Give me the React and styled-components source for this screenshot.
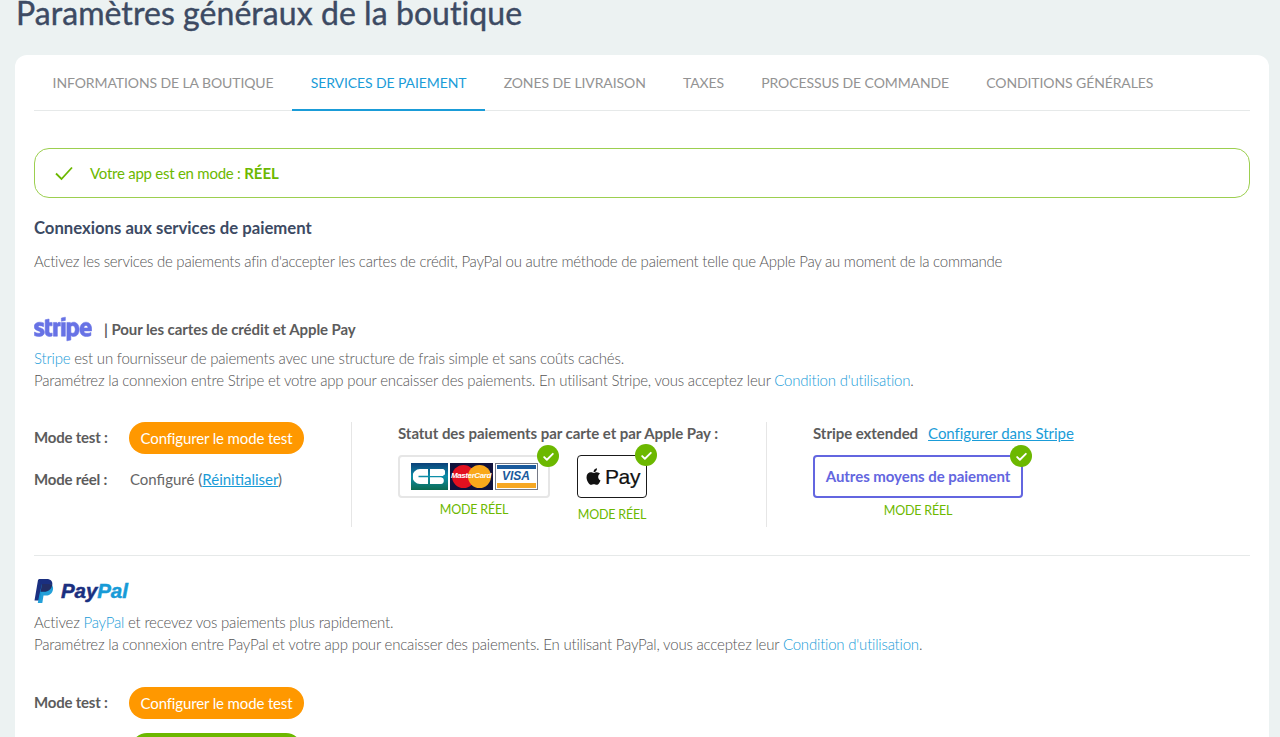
import React from 'react';
import styled, { createGlobalStyle } from 'styled-components';
import { FaStripe, FaApple } from 'react-icons/fa';

const GlobalStyle = createGlobalStyle`
  html, body {
    margin: 0;
    height: 737px;
    overflow: hidden;
    background: #ecf2f2;
    font-family: 'Lato', 'Liberation Sans', sans-serif;
  }
`;

const Page = styled.div`
  padding: 0 11px 0 15px;
`;

const Title = styled.h1`
  margin: -1px 0 28px 1px;
  font-size: 32px;
  line-height: 28px;
  font-weight: 400;
  letter-spacing: 0.06px;
  -webkit-text-stroke: 0.4px #3c4a63;
  color: #3c4a63;
`;

const Card = styled.div`
  background: #fff;
  border-radius: 12px;
  padding: 0 19px 40px;
`;

const Tabs = styled.div`
  display: flex;
  height: 55px;
  border-bottom: 1px solid #e6e9e9;
`;

const Tab = styled.div`
  padding: 1px 18.6px 0;
  display: flex;
  align-items: center;
  height: 56px;
  box-sizing: border-box;
  font-size: 14px;
  letter-spacing: -0.1px;
  white-space: nowrap;
  color: ${(p) => (p.$active ? '#1a9cd8' : '#939393')};
  border-bottom: 2px solid ${(p) => (p.$active ? '#1a9cd8' : 'transparent')};
`;

const Alert = styled.div`
  display: flex;
  align-items: center;
  gap: 17px;
  height: 50px;
  box-sizing: border-box;
  margin-top: 37px;
  padding: 0 0 1px 20px;
  border: 1px solid #9ccf4f;
  border-radius: 15px;
  color: #6cb800;
  font-size: 15px;
  letter-spacing: -0.25px;
  strong { font-weight: 700; letter-spacing: 0; }
`;

const Heading = styled.h2`
  margin: 19px 0 0;
  font-size: 16.7px;
  line-height: 22px;
  font-weight: 700;
  color: #3c4a63;
`;

const Lead = styled.p`
  margin: 11px 0 0;
  font-size: 15px;
  line-height: 22px;
  font-weight: 300;
  letter-spacing: -0.25px;
  color: #555;
`;

const ProviderHead = styled.div`
  display: flex;
  align-items: center;
  height: 30px;
  margin-top: ${(p) => p.$top || 0}px;
  gap: 12px;
  font-size: 15px;
  font-weight: 700;
  letter-spacing: -0.08px;
  color: #5c5c5c;
`;

const StripeMark = styled(FaStripe)`
  width: 58px;
  height: 46px;
  color: #6772e5;
  stroke: currentColor;
  stroke-width: 6px;
`;

const PaypalLogo = styled.div`
  display: flex;
  align-items: center;
  gap: 7px;
  font: italic 700 20.5px 'Liberation Sans', sans-serif;
  -webkit-text-stroke: 0.5px currentColor;
  color: #1a2f80;
  span { color: #179bd7; }
`;

const Body = styled.p`
  margin: ${(p) => p.$top || 0}px 0 0;
  font-size: 15px;
  line-height: 22px;
  font-weight: 300;
  letter-spacing: -0.2px;
  color: #555;
  a { color: #1a9cd8; text-decoration: none; }
`;

const Columns = styled.div`
  display: grid;
  grid-template-columns: 318px 415px 1fr;
  margin-top: ${(p) => p.$top}px;
  height: 105px;
`;

const Column = styled.div`
  padding-left: ${(p) => p.$pad || 0}px;
  border-right: ${(p) => (p.$line ? '1px solid #e6e6e6' : 'none')};
`;

const ModeRow = styled.div`
  display: grid;
  grid-template-columns: 95px 1fr;
  align-items: center;
  height: ${(p) => p.$h}px;
  margin-bottom: ${(p) => p.$gap || 0}px;
  font-size: 15px;
  color: #666;
  a { color: #1a9cd8; }
`;

const ModeLabel = styled.span`
  font-weight: 700;
  letter-spacing: -0.2px;
  color: #5c5c5c;
  margin-bottom: ${(p) => p.$lift || 0}px;
`;

const ModeValue = styled.span`
  margin-left: 1px;
`;

const Pill = styled.button`
  width: ${(p) => p.$w || 175}px;
  height: 32px;
  margin-left: ${(p) => p.$left || 0}px;
  padding: 0;
  border: 0;
  border-radius: 16px;
  background: ${(p) => p.$bg || '#ff9800'};
  color: #fff;
  font: 400 15px 'Lato', sans-serif;
  letter-spacing: -0.14px;
`;

const ColTitle = styled.div`
  display: flex;
  gap: 10px;
  height: 22px;
  line-height: 22px;
  font-size: 15px;
  font-weight: 700;
  letter-spacing: -0.05px;
  color: #5c5c5c;
  a { color: #1a9cd8; font-weight: 400; }
`;

const Logos = styled.div`
  display: flex;
  gap: 27px;
  margin-top: 11px;
`;

const Stack = styled.div`
  display: flex;
  flex-direction: column;
  align-items: center;
`;

const BadgeBox = styled.div`
  position: relative;
  box-sizing: border-box;
  display: flex;
  align-items: center;
  justify-content: center;
  height: 43px;
  width: ${(p) => p.$w}px;
  border-radius: 4px;
  border: ${(p) => p.$border};
`;

const Check = styled.span`
  position: absolute;
  top: -12px;
  right: -11px;
  width: 22px;
  height: 22px;
  border-radius: 50%;
  background: #6cb800;
  display: flex;
  align-items: center;
  justify-content: center;
`;

const ModeTag = styled.div`
  margin-top: ${(p) => p.$top}px;
  font-size: 12.5px;
  line-height: 16px;
  letter-spacing: -0.2px;
  color: #6cb800;
`;

const CardLogos = styled.div`
  display: flex;
  gap: 2px;
`;

const CbLogo = styled.div`
  width: 37px;
  height: 27px;
  background: linear-gradient(#0a3f78, #0d8ea8 50%, #0c6a50);
  display: flex;
  align-items: center;
  justify-content: center;
`;

const McLogo = styled.div`
  position: relative;
  width: 43px;
  height: 27px;
  background: #10123c;
  overflow: hidden;
  &::before, &::after {
    content: '';
    position: absolute;
    top: 2px;
    width: 23px;
    height: 23px;
    border-radius: 50%;
  }
  &::before { left: 2px; background: #e2101f; }
  &::after { right: 2px; background: #f9a81b; }
  span {
    position: absolute;
    z-index: 1;
    left: 0;
    right: 0;
    top: 8px;
    text-align: center;
    font: italic 700 8px/10px 'Liberation Sans', sans-serif;
    letter-spacing: -0.4px;
    color: #fff;
  }
`;

const VisaLogo = styled.div`
  box-sizing: border-box;
  width: 43px;
  height: 27px;
  border: 1px solid #767a86;
  background: #fff;
  display: flex;
  flex-direction: column;
  padding: 1px;
  justify-content: space-between;
  align-items: center;
  i {
    display: block;
    height: 4px;
    width: 100%;
    background: #1a5a9c;
  }
  i:last-child { background: #f7a823; height: 5px; }
  b {
    font: italic 700 12px/11px 'Liberation Sans', sans-serif;
    color: #1a5a9c;
  }
`;

const ApplePay = styled.div`
  display: flex;
  align-items: center;
  gap: 2px;
  color: #111;
  font: 400 21px 'Liberation Sans', sans-serif;
  letter-spacing: -0.4px;
  -webkit-text-stroke: 0.2px #111;
`;

const OutlineBox = styled(BadgeBox)`
  color: #6366e0;
  font-size: 15px;
  font-weight: 700;
  letter-spacing: -0.05px;
  padding-bottom: 1px;
`;

const Separator = styled.div`
  height: 1px;
  background: #e6e9e9;
  margin-top: 28px;
`;

const Tick = () => (
  <svg width="13" height="13" viewBox="0 0 24 24" fill="none" stroke="#fff" strokeWidth="3.4" strokeLinecap="round" strokeLinejoin="round">
    <path d="M4 13l5 5L20 7" />
  </svg>
);

const PaypalP = () => (
  <svg width="20" height="24" viewBox="0 0 20 24">
    <path fill="#1a2f80" d="M5 0h7.500C17 0 19 2.600 18.200 6.400 17.300 11 14 13 10 13H7.500L6 21.500H0.500L4 1z" />
    <path fill="#179bd7" d="M8 5h6c3.800 0 5.600 2.200 5 5.500-.8 4-3.600 6-7 6H9.500L8.300 24H3.800l1.500-8z" opacity=".95" />
    <path fill="#222d65" d="M8 5h6.500c1.500 0 2.800.3 3.700 1-.8 4.400-4 6.800-8.200 6.800H6.600z" />
  </svg>
);

const tabs = [
  'INFORMATIONS DE LA BOUTIQUE',
  'SERVICES DE PAIEMENT',
  'ZONES DE LIVRAISON',
  'TAXES',
  'PROCESSUS DE COMMANDE',
  'CONDITIONS GÉNÉRALES',
];

export default function App() {
  return (
    <Page>
      <GlobalStyle />
      <Title>Paramètres généraux de la boutique</Title>
      <Card>
        <Tabs>
          {tabs.map((t, i) => (
            <Tab key={t} $active={i === 1}>{t}</Tab>
          ))}
        </Tabs>

        <Alert>
          <svg width="18" height="18" viewBox="0 0 18 18" fill="none" stroke="#6cb800" strokeWidth="1.8">
            <path d="M1 9.500l5.500 5.500L17 3.500" />
          </svg>
          <span>Votre app est en mode : <strong>RÉEL</strong></span>
        </Alert>

        <Heading>Connexions aux services de paiement</Heading>
        <Lead>Activez les services de paiements afin d'accepter les cartes de crédit, PayPal ou autre méthode de paiement telle que Apple Pay au moment de la commande</Lead>

        <ProviderHead $top={42}>
          <StripeMark />
          <span>| Pour les cartes de crédit et Apple Pay</span>
        </ProviderHead>
        <Body $top={3}>
          <a href="#s">Stripe</a> est un fournisseur de paiements avec une structure de frais simple et sans coûts cachés.<br />
          Paramétrez la connexion entre Stripe et votre app pour encaisser des paiements. En utilisant Stripe, vous acceptez leur <a href="#c">Condition d'utilisation</a>.
        </Body>

        <Columns $top={31}>
          <Column $line>
            <ModeRow $h={32} $gap={9}>
              <ModeLabel $lift={3}>Mode test :</ModeLabel>
              <Pill>Configurer le mode test</Pill>
            </ModeRow>
            <ModeRow $h={32}>
              <ModeLabel>Mode réel :</ModeLabel>
              <ModeValue>Configuré (<a href="#r">Réinitialiser</a>)</ModeValue>
            </ModeRow>
          </Column>
          <Column $line $pad={46}>
            <ColTitle>Statut des paiements par carte et par Apple Pay :</ColTitle>
            <Logos>
              <Stack>
                <BadgeBox $w={152} $border="2px solid #e6e6e6">
                  <CardLogos>
                    <CbLogo>
                      <svg width="32" height="15" viewBox="0 0 32 15" fill="#fff">
                        <path d="M15 0H7a7.500 7.500 0 0 0 0 15h8V8.300H5.500V6.700H15z" />
                        <path d="M17 0h11a3.500 3.500 0 0 1 2 6.700V7H17zM17 8.300h11a3.400 3.400 0 0 1 0 6.700H17z" />
                      </svg>
                    </CbLogo>
                    <McLogo><span>MasterCard</span></McLogo>
                    <VisaLogo><i /><b>VISA</b><i /></VisaLogo>
                  </CardLogos>
                  <Check><Tick /></Check>
                </BadgeBox>
                <ModeTag $top={4}>MODE RÉEL</ModeTag>
              </Stack>
              <Stack>
                <BadgeBox $w={70} $border="1.5px solid #1a1a1a">
                  <ApplePay><FaApple size={19} />Pay</ApplePay>
                  <Check><Tick /></Check>
                </BadgeBox>
                <ModeTag $top={9}>MODE RÉEL</ModeTag>
              </Stack>
            </Logos>
          </Column>
          <Column $pad={46}>
            <ColTitle>Stripe extended <a href="#x">Configurer dans Stripe</a></ColTitle>
            <Logos>
              <Stack>
                <OutlineBox $w={210} $border="2px solid #6366e0">
                  Autres moyens de paiement
                  <Check><Tick /></Check>
                </OutlineBox>
                <ModeTag $top={5}>MODE RÉEL</ModeTag>
              </Stack>
            </Logos>
          </Column>
        </Columns>

        <Separator />

        <ProviderHead $top={20}>
          <PaypalLogo>
            <PaypalP />
            <div>Pay<span>Pal</span></div>
          </PaypalLogo>
        </ProviderHead>
        <Body $top={5}>
          Activez <a href="#p">PayPal</a> et recevez vos paiements plus rapidement.<br />
          Paramétrez la connexion entre PayPal et votre app pour encaisser des paiements. En utilisant PayPal, vous acceptez leur <a href="#c">Condition d'utilisation</a>.
        </Body>

        <Columns $top={32}>
          <Column>
            <ModeRow $h={32} $gap={14}>
              <ModeLabel $lift={3}>Mode test :</ModeLabel>
              <Pill>Configurer le mode test</Pill>
            </ModeRow>
            <ModeRow $h={32}>
              <ModeLabel>Mode réel :</ModeLabel>
              <Pill $bg="#6cb800" $w={171} $left={2}>Configurer le mode réel</Pill>
            </ModeRow>
          </Column>
        </Columns>
      </Card>
    </Page>
  );
}
